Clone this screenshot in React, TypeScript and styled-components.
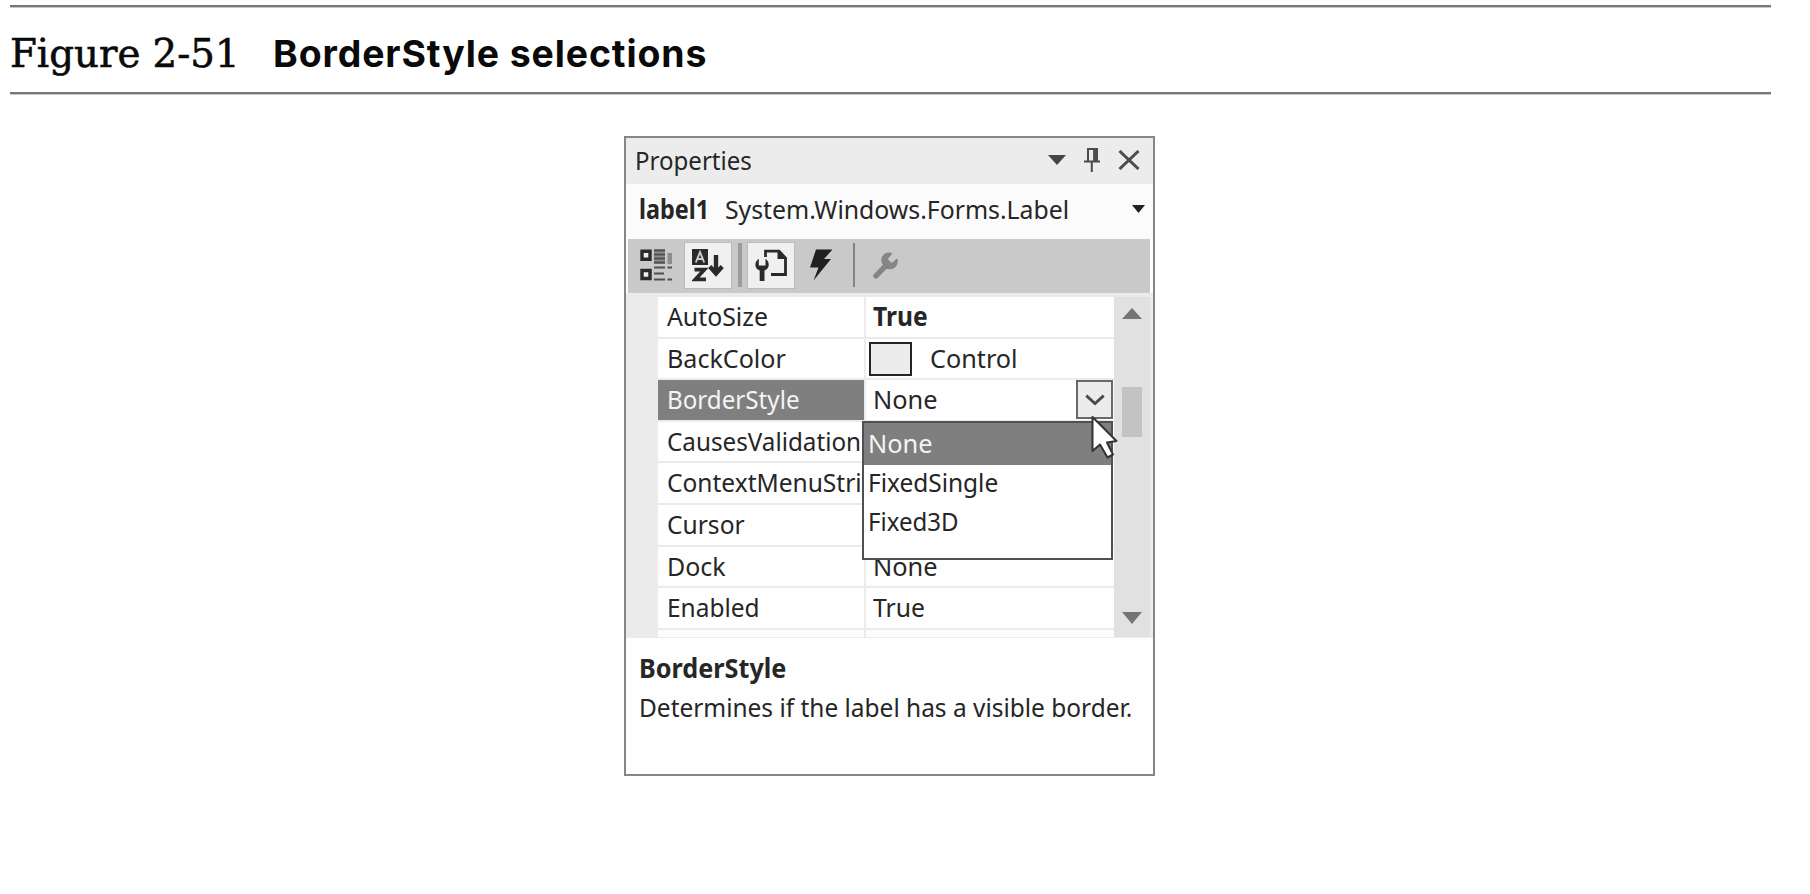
import React from "react";
import styled, { createGlobalStyle, css } from "styled-components";

const Global = createGlobalStyle`
  html, body { margin: 0; background: #fff; }
  body { font-family: "Noto Sans", "Open Sans", sans-serif; font-size: 26px; color: #262626; }
  *, *::before, *::after { box-sizing: border-box; }
  svg { display: block; flex: none; }
`;

const Page = styled.main`
  display: flex;
  flex-direction: column;
  width: 1810px;
  height: 894px;
  padding-top: 5px;
  overflow: hidden;
`;

const Caption = styled.header`
  display: flex;
  align-items: flex-start;
  width: 1761px;
  height: 89px;
  margin-left: 10px;
  border-top: 2px solid #777;
  border-bottom: 2px solid #777;
  box-shadow: 0 1px 0 #c8c8c8, inset 0 1px 0 #c8c8c8;
  color: #0a0a0a;
  white-space: nowrap;
`;

const FigureNumber = styled.span`
  width: 263px;
  padding-top: 24px;
  font: 400 38.7px/45px "DejaVu Serif", serif;
  -webkit-text-stroke: 0.6px #0a0a0a;
`;

const FigureTitle = styled.h1`
  margin: 0;
  padding-top: 24px;
  font: 700 37.4px/45px Inter, sans-serif;
  letter-spacing: 0.9px;
`;

const Panel = styled.section`
  display: flex;
  flex-direction: column;
  width: 531px;
  height: 640px;
  margin: 42px 0 0 624px;
  border: 2px solid #868686;
  background: #fefefe;
`;

const Label = styled.span<{ $fit: number; $bold?: boolean }>`
  display: inline-block;
  line-height: 36px;
  white-space: nowrap;
  font-weight: ${(p) => (p.$bold ? 700 : 400)};
  transform: scaleX(${(p) => p.$fit});
  transform-origin: left center;
`;

const TitleBar = styled.div`
  display: flex;
  align-items: center;
  height: 46px;
  padding: 0 13px 2px 8.5px;
  background: #ececec;
`;

const WindowButtons = styled.div`
  display: flex;
  align-items: center;
  gap: 18px;
  margin-left: auto;
`;

const ObjectSelector = styled.div`
  display: flex;
  align-items: center;
  height: 55px;
  padding: 0 8px 5px 13px;
  background: #fbfbfb;

  ${Label}:first-child { width: 85.5px; }
  svg { margin-left: auto; }
`;

const Toolbar = styled.div`
  display: flex;
  align-items: center;
  height: 54px;
  margin: 0 3px 0 2px;
  padding: 0 0 2px 11px;
  background: #c9c9c9;
`;

const ToolButton = styled.div<{ $active?: boolean; $width: number }>`
  display: flex;
  align-items: center;
  justify-content: center;
  width: ${(p) => p.$width}px;
  height: 45px;
  ${(p) =>
    p.$active &&
    css`
      background: #f0f0f0;
      box-shadow: 0 0 0 1px #bcbcbc;
    `}
`;

const ToolSeparator = styled.div<{ $thick?: boolean }>`
  width: ${(p) => (p.$thick ? 4 : 2)}px;
  height: 44px;
  margin: ${(p) => (p.$thick ? "0 6px 0 7px" : "0 0 0 1px")};
  background: ${(p) => (p.$thick ? "#9c9c9c" : "#838383")};
`;

const GridArea = styled.div`
  position: relative;
  display: flex;
  height: 345px;
  padding: 4px 3px 1px 32px;
  background: #ebebeb;
`;

const Rows = styled.div`
  flex: 1;
  overflow: hidden;
`;

const Row = styled.div`
  display: grid;
  grid-template-columns: 206px 1fr;
  gap: 2px;
  height: 41.6px;
  padding-bottom: 2px;
`;

const Cell = styled.div<{ $selected?: boolean }>`
  display: flex;
  align-items: center;
  overflow: hidden;
  padding: 0 0 1.5px 9px;
  background: ${(p) => (p.$selected ? "#7f7f7f" : "#fefefe")};
  color: ${(p) => (p.$selected ? "#f4f4f4" : "inherit")};
`;

const ValueCell = styled(Cell)`
  padding-left: 7px;
`;

const SwatchCell = styled(Cell)`
  padding: 0 0 0 3px;
  gap: 18px;

  ${Label} { padding-bottom: 1.5px; }
`;

const Swatch = styled.div`
  width: 43px;
  height: 34px;
  margin-top: 1px;
  border: 2px solid #242424;
  background: #ececec;
`;

const EditorCell = styled(Cell)`
  justify-content: space-between;
  padding: 0 1px 0 7px;

  ${Label} { padding-bottom: 1.5px; }
`;

const DropButton = styled.div`
  display: flex;
  align-items: center;
  justify-content: center;
  width: 37px;
  height: 39px;
  border: 2px solid #696969;
  background: #ececec;
`;

const ScrollBar = styled.div`
  display: flex;
  flex-direction: column;
  align-items: center;
  width: 36px;
  padding: 11px 0 13px;
  background: #e1e1e1;
`;

const Thumb = styled.div`
  width: 20px;
  height: 50px;
  margin: 68px 0 auto;
  background: #c3c3c3;
`;

const DropList = styled.div`
  position: absolute;
  top: 128px;
  left: 236px;
  width: 251px;
  height: 139px;
  border: 2px solid #505050;
  background: #fff;
`;

const Option = styled.div<{ $selected?: boolean }>`
  display: flex;
  align-items: center;
  height: ${(p) => (p.$selected ? 42 : 39)}px;
  padding: ${(p) => (p.$selected ? "0 0 2px 4px" : "0 0 5px 4px")};
  background: ${(p) => (p.$selected ? "#7f7f7f" : "transparent")};
  color: ${(p) => (p.$selected ? "#f4f4f4" : "inherit")};
`;

const Pointer = styled.svg`
  position: absolute;
  top: 121px;
  left: 464px;
`;

const Description = styled.footer`
  display: flex;
  flex-direction: column;
  gap: 3px;
  padding: 12px 0 0 12.5px;
`;

function Triangle({ w, h, up, color }: { w: number; h: number; up?: boolean; color: string }) {
  return (
    <svg width={w} height={h} viewBox={`0 0 ${w} ${h}`}>
      <path d={up ? `M0 ${h}L${w / 2} 0L${w} ${h}Z` : `M0 0H${w}L${w / 2} ${h}Z`} fill={color} />
    </svg>
  );
}

const PinIcon = () => (
  <svg width="16" height="26" viewBox="0 0 16 26" fill="none" stroke="#4c4c4c" strokeWidth="2">
    <path d="M4 14V2H13V14M0 14.5H16M7.8 15V25" />
    <path d="M10.8 2V14" strokeWidth="3.4" />
  </svg>
);

const CloseIcon = () => (
  <svg width="22" height="20" viewBox="0 0 22 20" stroke="#4c4c4c" strokeWidth="3">
    <path d="M1.5 1L20.5 19M20.5 1L1.5 19" />
  </svg>
);

const CategorizedIcon = () => (
  <svg width="33" height="33" viewBox="0 0 33 33">
    <path d="M2 2.2H10V10.2H2ZM2 21.5H10V29.5H2Z" fill="#eee" stroke="#2a2a2a" strokeWidth="3.4" />
    <path d="M14 0H25V15H14ZM27.5 4H32V15H27.5Z" fill="#8d8d8d" />
    <path
      d="M14 1.5H25M14 5.5H25M14 9.5H25M14 13.5H25M14 18.5H25M27.5 18.5H32M14 24.5H24M14 30.5H25M27.5 30.5H32"
      stroke="#505050"
      strokeWidth="2"
    />
  </svg>
);

const SortIcon = () => (
  <svg width="33" height="33" viewBox="0 0 33 33">
    <path d="M0 0H16V16H0Z" fill="#2a2a2a" />
    <path d="M3.8 13.5L8 3L12.2 13.5M5.3 10H10.7" fill="none" stroke="#ccc" strokeWidth="1.9" />
    <path d="M2.5 20.6H12.5L3.3 30.4H14" fill="none" stroke="#2a2a2a" strokeWidth="3.6" />
    <path d="M24 6V25M17.8 17.5L24 24.5L30.2 17.5" fill="none" stroke="#2a2a2a" strokeWidth="4.4" />
  </svg>
);

const PropertyPageIcon = () => (
  <svg width="33" height="33" viewBox="0 0 33 33">
    <path d="M10.5 8V2.2H24L30.5 9V25.5H16" fill="none" stroke="#2a2a2a" strokeWidth="2.8" />
    <path d="M22.5 1V10H32Z" fill="#2a2a2a" />
    <path
      d="M3.8 9.8C-1.2 13-.6 20 4.7 21.5V32H9.5V21.5C14.8 20 15.2 13 10.5 9.8V16.5H3.8Z"
      fill="#2a2a2a"
    />
  </svg>
);

const EventsIcon = () => (
  <svg width="23" height="32" viewBox="0 0 23 32">
    <path d="M6 .5H22.5L14 10H21L3.5 31.5L8.5 18.5H0Z" fill="#202020" />
  </svg>
);

const WrenchIcon = () => (
  <svg width="26" height="28" viewBox="0 0 26 28">
    <path d="M3 24.8L13 14.5" stroke="#858585" strokeWidth="5.4" strokeLinecap="round" />
    <path
      d="M19.5 2.2C12-.4 6.5 5.5 8.8 12.2L14.2 18C21 19.8 26.5 14 24.3 7.2L18.7 12L14.8 8.2Z"
      fill="#858585"
    />
  </svg>
);

const ChevronIcon = () => (
  <svg width="20" height="12" viewBox="0 0 20 12" fill="none" stroke="#4a4a4a" strokeWidth="2.8">
    <path d="M1.3 1.6L10 9.6L18.7 1.6" />
  </svg>
);

export default function App() {
  return (
    <Page>
      <Global />
      <Caption>
        <FigureNumber>Figure 2-51</FigureNumber>
        <FigureTitle>BorderStyle selections</FigureTitle>
      </Caption>
      <Panel>
        <TitleBar>
          <Label $fit={0.925}>Properties</Label>
          <WindowButtons>
            <Triangle w={18} h={10} color="#454545" />
            <PinIcon />
            <CloseIcon />
          </WindowButtons>
        </TitleBar>
        <ObjectSelector>
          <Label $fit={0.9} $bold>label1</Label>
          <Label $fit={0.953}>System.Windows.Forms.Label</Label>
          <Triangle w={13} h={8} color="#222" />
        </ObjectSelector>
        <Toolbar>
          <ToolButton $width={34}><CategorizedIcon /></ToolButton>
          <ToolButton $width={12} />
          <ToolButton $width={46} $active><SortIcon /></ToolButton>
          <ToolSeparator $thick />
          <ToolButton $width={46} $active><PropertyPageIcon /></ToolButton>
          <ToolButton $width={54}><EventsIcon /></ToolButton>
          <ToolButton $width={4} />
          <ToolSeparator />
          <ToolButton $width={62}><WrenchIcon /></ToolButton>
        </Toolbar>
        <GridArea>
          <Rows>
            <Row>
              <Cell><Label $fit={0.955}>AutoSize</Label></Cell>
              <ValueCell><Label $fit={0.945} $bold>True</Label></ValueCell>
            </Row>
            <Row>
              <Cell><Label $fit={0.965}>BackColor</Label></Cell>
              <SwatchCell>
                <Swatch />
                <Label $fit={0.97}>Control</Label>
              </SwatchCell>
            </Row>
            <Row>
              <Cell $selected><Label $fit={0.93}>BorderStyle</Label></Cell>
              <EditorCell>
                <Label $fit={0.975}>None</Label>
                <DropButton><ChevronIcon /></DropButton>
              </EditorCell>
            </Row>
            <Row>
              <Cell><Label $fit={0.932}>CausesValidation</Label></Cell>
              <ValueCell />
            </Row>
            <Row>
              <Cell><Label $fit={0.943}>ContextMenuStri</Label></Cell>
              <ValueCell />
            </Row>
            <Row>
              <Cell><Label $fit={0.945}>Cursor</Label></Cell>
              <ValueCell />
            </Row>
            <Row>
              <Cell><Label $fit={0.96}>Dock</Label></Cell>
              <ValueCell><Label $fit={0.975}>None</Label></ValueCell>
            </Row>
            <Row>
              <Cell><Label $fit={0.94}>Enabled</Label></Cell>
              <ValueCell><Label $fit={0.95}>True</Label></ValueCell>
            </Row>
            <Row>
              <Cell />
              <ValueCell />
            </Row>
          </Rows>
          <ScrollBar>
            <Triangle w={20} h={11} up color="#747474" />
            <Thumb />
            <Triangle w={20} h={12} color="#747474" />
          </ScrollBar>
          <DropList>
            <Option $selected><Label $fit={0.975}>None</Label></Option>
            <Option><Label $fit={0.94}>FixedSingle</Label></Option>
            <Option><Label $fit={0.925}>Fixed3D</Label></Option>
          </DropList>
          <Pointer width="30" height="48" viewBox="0 0 30 48">
            <path
              d="M2.5 3V37L10 30.5L17.5 43.5L23 40.5L17 28.5L26.5 27Z"
              fill="#fff"
              stroke="#333"
              strokeWidth="2"
              strokeLinejoin="round"
            />
          </Pointer>
        </GridArea>
        <Description>
          <Label $fit={0.97} $bold>BorderStyle</Label>
          <Label $fit={0.94}>Determines if the label has a visible border.</Label>
        </Description>
      </Panel>
    </Page>
  );
}
